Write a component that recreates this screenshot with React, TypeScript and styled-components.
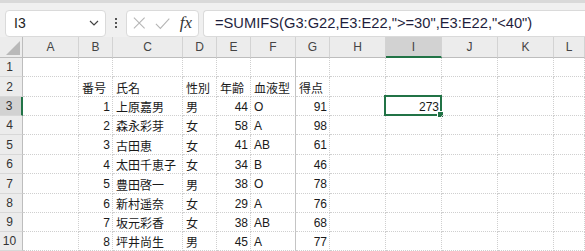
import React from "react";
import styled, { createGlobalStyle } from "styled-components";

const GlobalStyle = createGlobalStyle`
    html, body {
        margin: 0;
        padding: 0;
        background: #fff;
        overflow: hidden;
    }
    body {
        font-family: "Liberation Sans", "Noto Sans CJK JP", sans-serif;
    }
`;

const Window = styled.div`
    display: flex;
    flex-direction: column;
    width: 585px;
    height: 251px;
    overflow: hidden;
    background: #efefef;
`;

const TopStrip = styled.div`
    height: 3px;
    background: #d9d9d9;
`;

const FormulaBar = styled.div`
    display: flex;
    align-items: flex-start;
    height: 37px;
    padding: 7px 0 0 5px;
    box-sizing: border-box;
    background: #f0f0f0;
`;

const Box = styled.div<{ w?: number }>`
    display: flex;
    align-items: center;
    height: 27px;
    box-sizing: border-box;
    width: ${(p) => (p.w ? `${p.w}px` : "auto")};
    background: #fff;
    border: 1px solid #dadada;
    border-radius: 4px;
`;

const NameBox = styled(Box)`
    justify-content: space-between;
    padding: 0 6px 0 8px;
    font-size: 14px;
    color: #222;
`;

const Grip = styled.div`
    display: flex;
    flex-direction: column;
    gap: 2px;
    margin: 8px 9px 0 9px;
    span {
        width: 2px;
        height: 2px;
        background: #555;
    }
`;

const ButtonBox = styled(Box)`
    gap: 9px;
    padding: 0 6px;
    margin-right: 4px;
`;

const Fx = styled.span`
    font-family: "Liberation Serif", serif;
    font-style: italic;
    font-size: 17px;
    color: #333;
    margin-left: 1px;
`;

const FormulaInput = styled(Box)`
    flex: 1;
    border-right: none;
    border-radius: 4px 0 0 4px;
    padding-left: 11px;
    font-size: 14.7px;
    color: #1e1e3c;
    white-space: nowrap;
`;

const Sheet = styled.div`
    display: grid;
    grid-template-columns: 23px 56px 34px 70px 34px 34px 45px 34px 56px 56px 56px 56px 1fr;
    grid-template-rows: 21px 19px 20px 19px 19px 20px 19px 20px 19px 19px 19px;
    background: #fff;
    font-size: 12px;
`;

const Corner = styled.div`
    position: relative;
    background: #ececec;
    border-right: 1px solid #bdbdbd;
    border-bottom: 1px solid #bdbdbd;
    svg {
        position: absolute;
        right: 2px;
        bottom: 2px;
    }
`;

const ColHead = styled.div<{ active?: boolean }>`
    display: flex;
    align-items: center;
    justify-content: center;
    box-sizing: border-box;
    background: ${(p) => (p.active ? "#d2d2d2" : "#ececec")};
    color: #444;
    border-right: 1px solid #d3d3d3;
    border-bottom: ${(p) => (p.active ? "2px solid #217346" : "1px solid #bdbdbd")};
    padding-top: ${(p) => (p.active ? "1px" : "0")};
`;

const RowHead = styled.div<{ active?: boolean }>`
    display: flex;
    align-items: center;
    justify-content: center;
    box-sizing: border-box;
    padding-right: 3px;
    background: ${(p) => (p.active ? "#d2d2d2" : "#ececec")};
    color: #333;
    border-right: ${(p) => (p.active ? "2px solid #217346" : "1px solid #bdbdbd")};
    border-bottom: 1px solid #d8d8d8;
`;

const Cell = styled.div<{ num?: boolean; edge?: boolean }>`
    position: relative;
    display: flex;
    align-items: center;
    justify-content: ${(p) => (p.num ? "flex-end" : "flex-start")};
    box-sizing: border-box;
    padding: 1px 2px 0 3px;
    color: #1a1a1a;
    white-space: nowrap;
    border-right: ${(p) => (p.edge ? "1px solid #c4c4c4" : "1px dotted #cfcfcf")};
    border-bottom: 1px dotted #cfcfcf;
`;

const Selection = styled.div`
    position: absolute;
    left: -2px;
    top: -2px;
    right: -1px;
    bottom: -1px;
    border: 2px solid #217346;
    pointer-events: none;
`;

const FillHandle = styled.div`
    position: absolute;
    right: -4px;
    bottom: -4px;
    width: 5px;
    height: 5px;
    background: #217346;
    border: 1px solid #fff;
`;

const columns = ["A", "B", "C", "D", "E", "F", "G", "H", "I", "J", "K", "L"];
const numericCols = [1, 4, 6, 8];

const people: [number, string, string, number, string, number][] = [
    [1, "上原嘉男", "男", 44, "O", 91],
    [2, "森永彩芽", "女", 58, "A", 98],
    [3, "古田恵", "女", 41, "AB", 61],
    [4, "太田千恵子", "女", 34, "B", 46],
    [5, "豊田啓一", "男", 38, "O", 78],
    [6, "新村遥奈", "女", 29, "A", 76],
    [7, "坂元彩香", "女", 38, "AB", 68],
    [8, "坪井尚生", "男", 45, "A", 77],
];

const buildRows = (): string[][] => {
    const rows: string[][] = [];
    rows.push(Array(12).fill(""));
    rows.push(["", "番号", "氏名", "性別", "年齢", "血液型", "得点", "", "", "", "", ""]);
    people.forEach((p, i) => {
        const r = ["", String(p[0]), p[1], p[2], String(p[3]), p[4], String(p[5]), "", i === 0 ? "273" : "", "", "", ""];
        rows.push(r);
    });
    return rows;
};

const App = () => {
    const rows = buildRows();
    return (
        <Window>
            <GlobalStyle />
            <TopStrip />
            <FormulaBar>
                <NameBox w={101}>
                    <span>I3</span>
                    <svg width="10" height="6" viewBox="0 0 10 6">
                        <path d="M1 1 L5 5 L9 1" fill="none" stroke="#444" strokeWidth="1.2" />
                    </svg>
                </NameBox>
                <Grip>
                    <span />
                    <span />
                    <span />
                </Grip>
                <ButtonBox w={73}>
                    <svg width="14" height="14" viewBox="0 0 14 14">
                        <path d="M1 1 L13 13 M13 1 L1 13" stroke="#b5b5b5" strokeWidth="1.2" />
                    </svg>
                    <svg width="17" height="13" viewBox="0 0 17 13">
                        <path d="M1 7 L6 12 L16 1" fill="none" stroke="#b5b5b5" strokeWidth="1.2" />
                    </svg>
                    <Fx>fx</Fx>
                </ButtonBox>
                <FormulaInput>=SUMIFS(G3:G22,E3:E22,"&gt;=30",E3:E22,"&lt;40")</FormulaInput>
            </FormulaBar>
            <Sheet>
                <Corner>
                    <svg width="14" height="14" viewBox="0 0 14 14">
                        <polygon points="14,0 14,14 0,14" fill="#b9b9b9" />
                    </svg>
                </Corner>
                {columns.map((c) => (
                    <ColHead key={c} active={c === "I"}>
                        {c}
                    </ColHead>
                ))}
                {rows.map((r, ri) => (
                    <React.Fragment key={ri}>
                        <RowHead active={ri === 2}>{ri + 1}</RowHead>
                        {r.map((v, ci) => (
                            <Cell key={ci} num={ri > 1 && numericCols.includes(ci)} edge={ci === 5}>
                                {v}
                                {ri === 2 && ci === 8 && (
                                    <Selection>
                                        <FillHandle />
                                    </Selection>
                                )}
                            </Cell>
                        ))}
                    </React.Fragment>
                ))}
            </Sheet>
        </Window>
    );
};

export default App;
